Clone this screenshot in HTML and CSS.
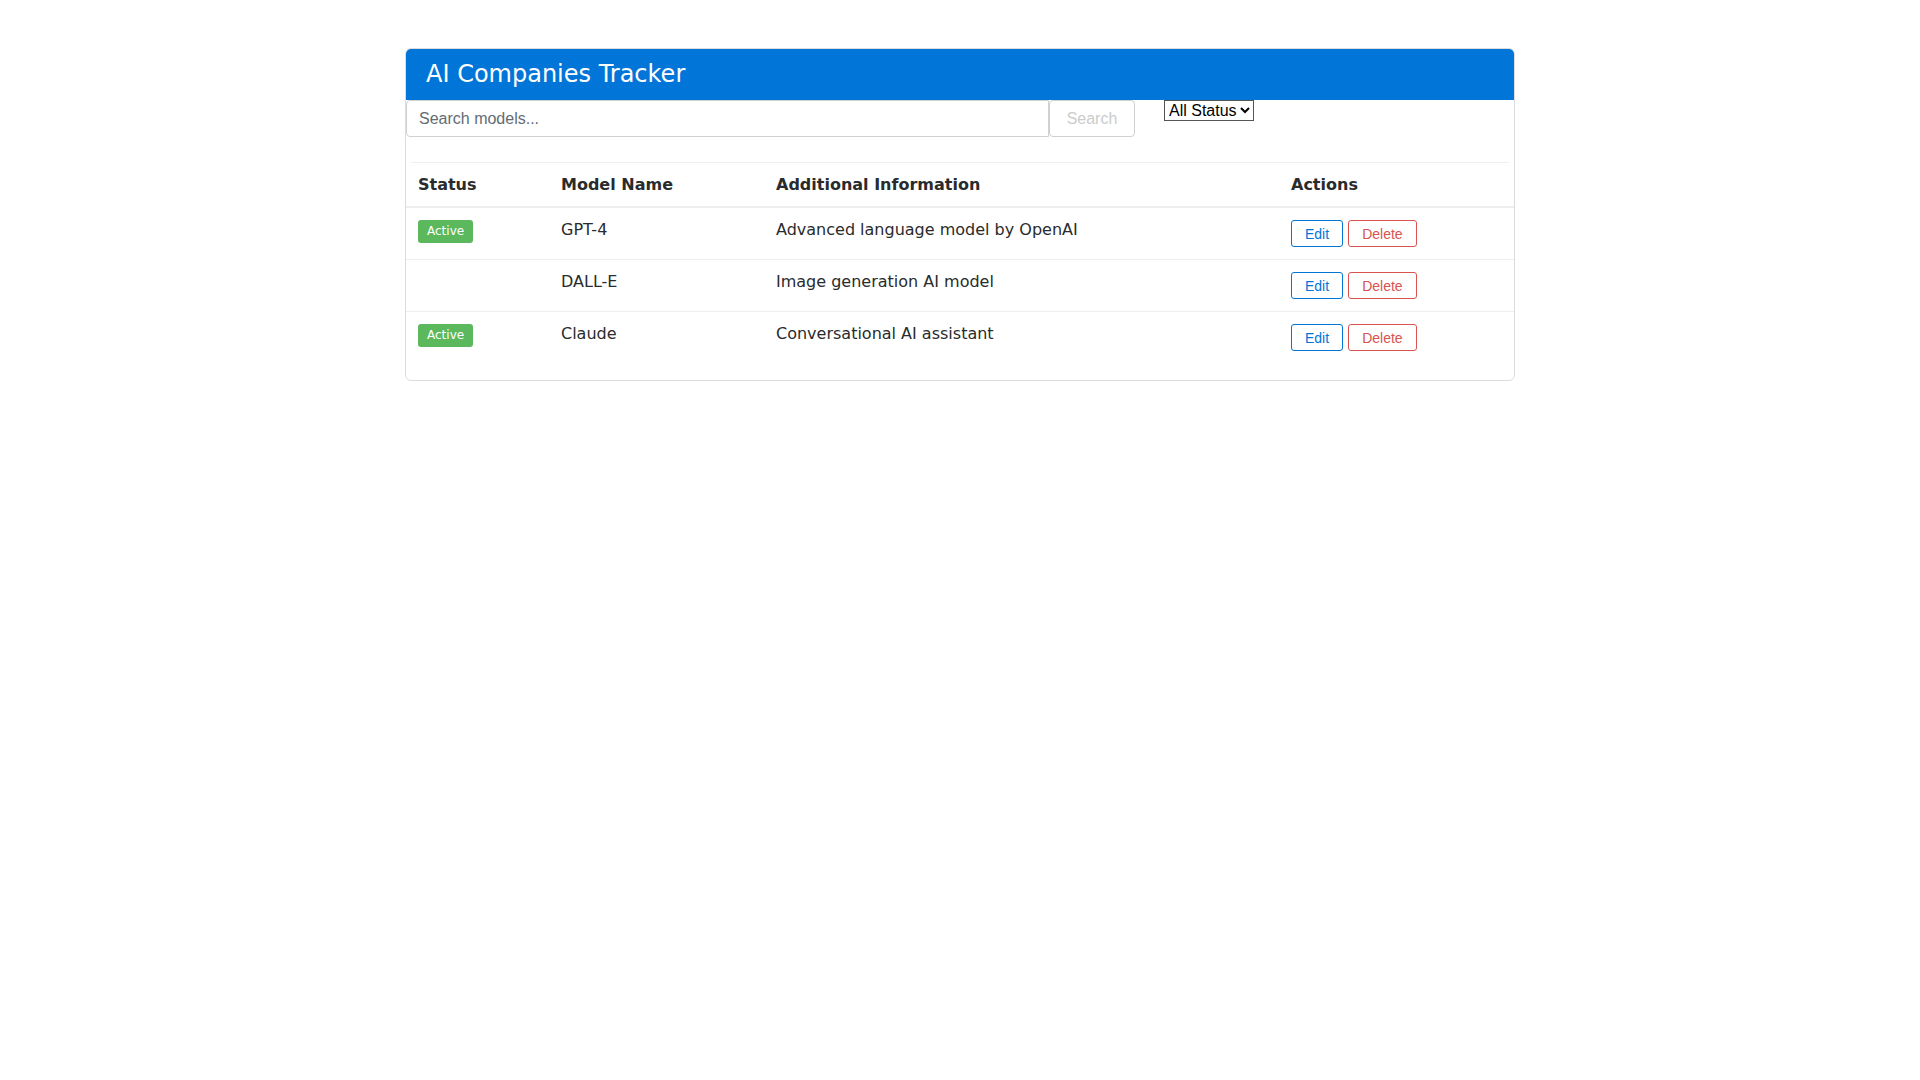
FILE: index.html
```html
<!DOCTYPE html>
<html>
<head>
	<title>AI Companies Tracker</title>

	<link rel="stylesheet" href="styles.css">

</head>
<body>

	<div id="boxTracker">

		<div id="boxHeader">
			<h1 id="lblTitle">AI Companies Tracker</h1>
		</div>

		<div id="boxControls">
			<div id="boxSearch">
				<input id="inputSearch" type="text" placeholder="Search models...">
				<button id="btnSearch">Search</button>
			</div>
			<select id="selectStatus">
				<option>All Status</option>
				<option>Active</option>
				<option>Inactive</option>
			</select>
		</div>

		<div class="lineTop"></div>

		<table id="tblModels">
			<thead>
				<tr>
					<th class="colStatus">Status</th>
					<th class="colName">Model Name</th>
					<th class="colInfo">Additional Information</th>
					<th class="colActions">Actions</th>
				</tr>
			</thead>
			<tbody>
				<tr>
					<td><span class="badgeActive">Active</span></td>
					<td>GPT-4</td>
					<td>Advanced language model by OpenAI</td>
					<td>
						<div class="boxActions">
							<button class="btnEdit" data-modelId="1">Edit</button>
							<button class="btnDelete" data-modelId="1">Delete</button>
						</div>
					</td>
				</tr>
				<tr>
					<td></td>
					<td>DALL-E</td>
					<td>Image generation AI model</td>
					<td>
						<div class="boxActions">
							<button class="btnEdit" data-modelId="2">Edit</button>
							<button class="btnDelete" data-modelId="2">Delete</button>
						</div>
					</td>
				</tr>
				<tr>
					<td><span class="badgeActive">Active</span></td>
					<td>Claude</td>
					<td>Conversational AI assistant</td>
					<td>
						<div class="boxActions">
							<button class="btnEdit" data-modelId="3">Edit</button>
							<button class="btnDelete" data-modelId="3">Delete</button>
						</div>
					</td>
				</tr>
			</tbody>
		</table>

	</div>

</body>
</html>
```

FILE: styles.css
```css
*{
	margin: 0px;
	padding: 0px;
	box-sizing: border-box;
}

body{
	font-family: "DejaVu Sans", sans-serif;
	font-size: 16px;
	color: #292b2c;
	background-color: white;
}

#boxTracker{
	width: 1110px;
	margin: 48px auto 0px auto;
	padding-bottom: 17px;
	border: 1px solid #dcdcdc;
	border-radius: 6px;
	overflow: hidden;
}

#boxHeader{
	background-color: #0275d8;
	color: white;
	padding: 11px 20px;
}

#lblTitle{
	font-size: 24px;
	font-weight: normal;
	line-height: 29px;
}

#boxControls{
	display: flex;
	align-items: flex-start;
	margin-bottom: 25px;
}

#boxSearch{
	display: flex;
	width: 729px;
}

#inputSearch{
	flex: 1;
	height: 37px;
	padding: 0px 12px;
	font-family: "Liberation Sans", Arial, sans-serif;
	font-size: 16px;
	color: #464a4c;
	border: 1px solid #d0d0d0;
	border-radius: 4px 0px 0px 4px;
	outline: none;
}
#inputSearch::placeholder{
	color: #636c72;
}

#btnSearch{
	width: 86px;
	height: 37px;
	font-family: "Liberation Sans", Arial, sans-serif;
	font-size: 16px;
	color: #cccccc;
	background-color: white;
	border: 1px solid #d0d0d0;
	border-radius: 4px;
}

#selectStatus{
	margin-left: 29px;
	height: 21px;
	font-family: "Liberation Sans", Arial, sans-serif;
	font-size: 16px;
	color: black;
	background-color: white;
	border: 1px solid #555555;
	border-radius: 0px;
}

.lineTop{
	height: 1px;
	margin: 0px 5px;
	background-color: #eceeef;
}

#tblModels{
	width: 100%;
	border-collapse: collapse;
	table-layout: fixed;
}

#tblModels th,
#tblModels td{
	text-align: left;
	vertical-align: top;
	padding: 12px;
	line-height: 19px;
}

#tblModels thead th{
	border-bottom: 2px solid #eceeef;
}

#tblModels tbody tr{
	border-bottom: 1px solid #eceeef;
}
#tblModels tbody tr:last-child{
	border-bottom: none;
}

.colStatus{
	width: 143px;
}
.colName{
	width: 215px;
}
.colInfo{
	width: 515px;
}
.colActions{
	width: 235px;
}

.badgeActive{
	display: inline-block;
	padding: 4px 9px;
	font-size: 12px;
	line-height: 15px;
	color: white;
	background-color: #5cb85c;
	border-radius: 3px;
}

.boxActions{
	display: flex;
	gap: 5px;
}

.btnEdit,
.btnDelete{
	height: 27px;
	padding: 0px 13px;
	font-family: "Liberation Sans", Arial, sans-serif;
	font-size: 14px;
	background-color: white;
	border-radius: 3px;
}
.btnEdit{
	color: #0275d8;
	border: 1px solid #0275d8;
}
.btnDelete{
	color: #d9534f;
	border: 1px solid #d9534f;
}
```
